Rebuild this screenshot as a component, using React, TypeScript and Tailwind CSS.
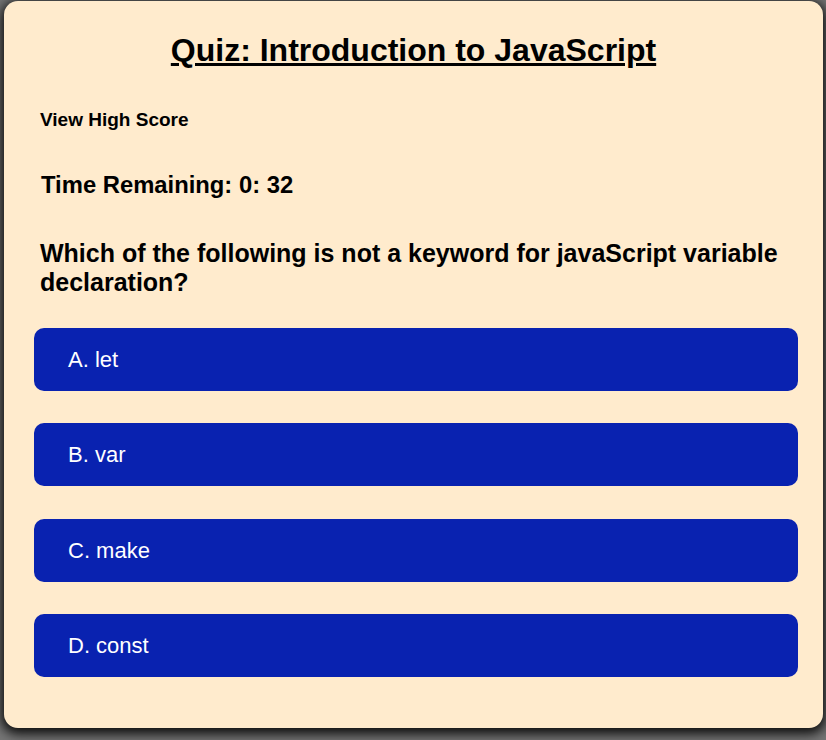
import React, { ReactElement } from 'react'

const choices = ['A. let', 'B. var', 'C. make', 'D. const']

const ChoiceButton: React.FC<{ label: string }> = ({ label }): ReactElement => {
  return (
    <button className="flex h-[63px] w-full items-center rounded-[10px] bg-[#0922b0] pl-[34px] text-left text-[22px] leading-[25px] text-white">
      {label}
    </button>
  )
}

const App: React.FC = (): ReactElement => {
  return (
    <div
      className="min-h-screen overflow-hidden bg-[#767676] pl-1 pt-px text-black"
      style={{ fontFamily: '"Liberation Sans", Arial, sans-serif' }}
    >
      <div className="h-[727px] w-[819px] rounded-[14px] bg-[#ffebcd] pt-[31px] shadow-[0_3px_12px_3px_rgba(0,0,0,0.9)]">
        <h1 className="text-center text-[32px] font-bold leading-[37px] underline">
          Quiz: Introduction to JavaScript
        </h1>

        <h3 className="mt-10 pl-9 text-[19px] font-bold leading-[21.5px]">
          View High Score
        </h3>

        <h2 className="mt-10 pl-[37px] text-[23.8px] font-bold leading-[27.6px]">
          Time Remaining: 0: 32
        </h2>

        <p className="mt-[41px] pl-9 pr-6 text-[25px] font-bold leading-[28.7px]">
          Which of the following is not a keyword for javaScript variable
          declaration?
        </p>

        <div className="ml-[30px] mt-[31px] flex w-[764px] flex-col gap-[32.6px]">
          {choices.map((c) => (
            <ChoiceButton key={c} label={c} />
          ))}
        </div>
      </div>
    </div>
  )
}

export default App
